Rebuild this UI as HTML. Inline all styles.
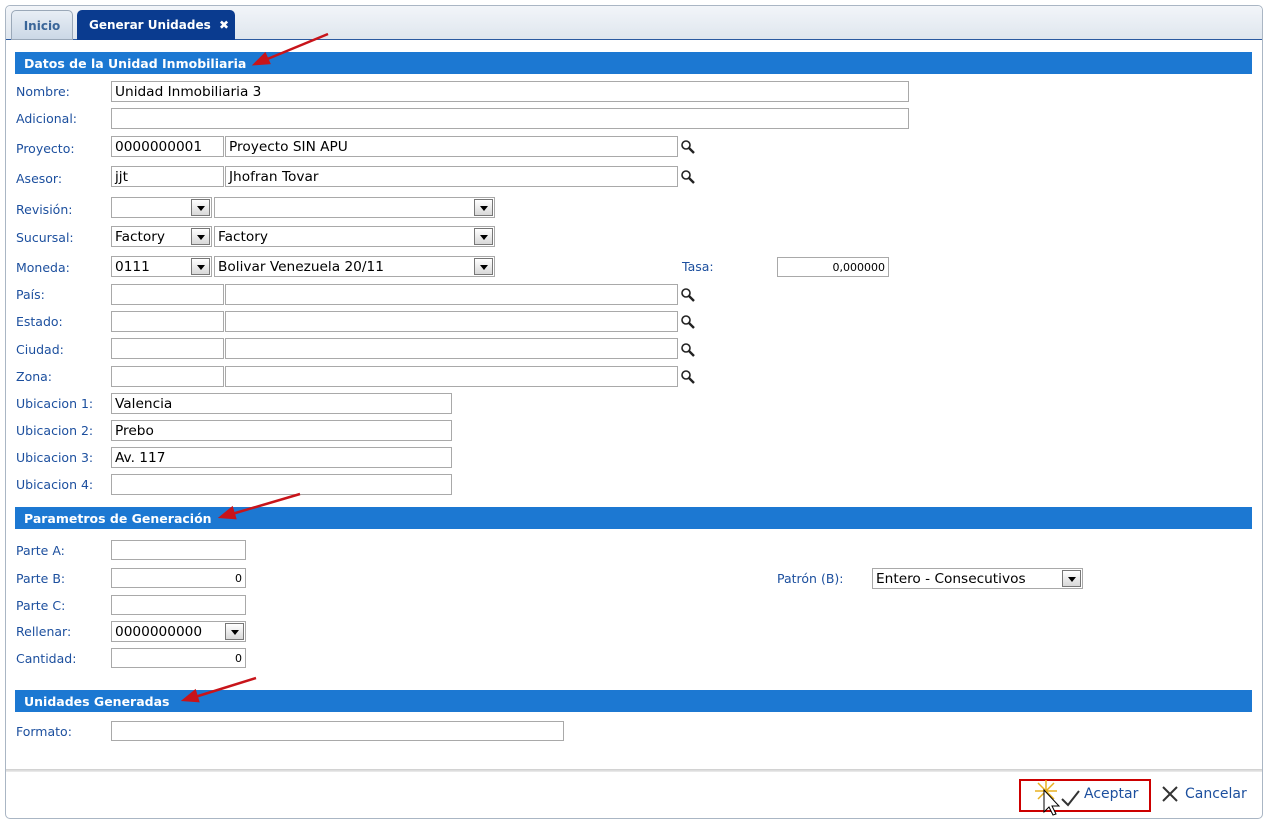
<!DOCTYPE html>
<html><head><meta charset="utf-8"><style>
*{box-sizing:border-box}
body{margin:0;width:1272px;height:826px;background:#fff;font-family:"DejaVu Sans",Verdana,sans-serif;position:relative;overflow:hidden}
.a{position:absolute}
.panel{left:5px;top:5px;width:1258px;height:814px;border:1px solid #aab6c4;border-radius:5px;background:#fff}
.tabbar{left:6px;top:6px;width:1256px;height:34px;background:linear-gradient(#f2f5f9,#dfe6ee);border-bottom:1px solid #2b5aa0;border-radius:5px 5px 0 0}
.tab{top:10px;height:30px;border-radius:5px 5px 0 0;font-size:12px;font-weight:bold;line-height:30px}
.hdr{left:15px;width:1237px;height:22px;background:#1c78d2;color:#fff;font-weight:bold;font-size:12.5px;line-height:24px;padding-left:9px}
.lb{left:16px;font-size:12.5px;color:#1c4f9e;line-height:14px}
.in{height:21px;border:1px solid #a9a9a9;background:#fff;font-size:13.7px;line-height:20px;padding-left:3px;color:#000;white-space:nowrap;overflow:hidden}
.r{text-align:right;padding-right:3px;font-size:11px}
.dd{position:absolute;right:1px;top:1px;width:19px;height:17px;border:1px solid #777;background:linear-gradient(#fff,#d8d8d8)}
.dd:after{content:"";position:absolute;left:5px;top:6px;border-left:4px solid transparent;border-right:4px solid transparent;border-top:5px solid #000}
</style></head><body>
<div class="a panel"></div>
<div class="a tabbar"></div>
<div class="a tab" style="left:11px;width:62px;background:linear-gradient(#e8eef5,#ccd8e6);border:1px solid #9aa8b8;color:#3a6699;text-align:center">Inicio</div>
<div class="a tab" style="left:77px;width:158px;background:#0a3b8f;color:#fff;padding-left:12px">Generar Unidades<span style="position:absolute;left:142px">✖</span></div>

<div class="a hdr" style="top:52px">Datos de la Unidad Inmobiliaria</div>
<div class="a hdr" style="top:507px">Parametros de Generación</div>
<div class="a hdr" style="top:690px">Unidades Generadas</div>

<div class="a lb" style="top:85px">Nombre:</div><div class="a in" style="left:111px;top:81px;width:798px">Unidad Inmobiliaria 3</div>
<div class="a lb" style="top:112px">Adicional:</div><div class="a in" style="left:111px;top:108px;width:798px"></div>
<div class="a lb" style="top:142px">Proyecto:</div><div class="a in" style="left:111px;top:136px;width:113px">0000000001</div><div class="a in" style="left:225px;top:136px;width:453px">Proyecto SIN APU</div>
<div class="a lb" style="top:172px">Asesor:</div><div class="a in" style="left:111px;top:166px;width:113px">jjt</div><div class="a in" style="left:225px;top:166px;width:453px">Jhofran Tovar</div>
<div class="a lb" style="top:203px">Revisión:</div><div class="a in" style="left:111px;top:197px;width:101px"><span class="dd"></span></div><div class="a in" style="left:214px;top:197px;width:281px"><span class="dd"></span></div>
<div class="a lb" style="top:231px">Sucursal:</div><div class="a in" style="left:111px;top:226px;width:101px">Factory<span class="dd"></span></div><div class="a in" style="left:214px;top:226px;width:281px">Factory<span class="dd"></span></div>
<div class="a lb" style="top:261px">Moneda:</div><div class="a in" style="left:111px;top:256px;width:101px">0111<span class="dd"></span></div><div class="a in" style="left:214px;top:256px;width:281px">Bolivar Venezuela 20/11<span class="dd"></span></div>
<div class="a lb" style="left:682px;top:260px">Tasa:</div><div class="a in r" style="left:777px;top:257px;width:112px;height:20px">0,000000</div>
<div class="a lb" style="top:288px">País:</div><div class="a in" style="left:111px;top:284px;width:113px"></div><div class="a in" style="left:225px;top:284px;width:453px"></div>
<div class="a lb" style="top:315px">Estado:</div><div class="a in" style="left:111px;top:311px;width:113px"></div><div class="a in" style="left:225px;top:311px;width:453px"></div>
<div class="a lb" style="top:343px">Ciudad:</div><div class="a in" style="left:111px;top:338px;width:113px"></div><div class="a in" style="left:225px;top:338px;width:453px"></div>
<div class="a lb" style="top:370px">Zona:</div><div class="a in" style="left:111px;top:366px;width:113px"></div><div class="a in" style="left:225px;top:366px;width:453px"></div>
<div class="a lb" style="top:397px">Ubicacion 1:</div><div class="a in" style="left:111px;top:393px;width:341px">Valencia</div>
<div class="a lb" style="top:424px">Ubicacion 2:</div><div class="a in" style="left:111px;top:420px;width:341px">Prebo</div>
<div class="a lb" style="top:451px">Ubicacion 3:</div><div class="a in" style="left:111px;top:447px;width:341px">Av. 117</div>
<div class="a lb" style="top:478px">Ubicacion 4:</div><div class="a in" style="left:111px;top:474px;width:341px"></div>

<svg class="a" style="left:680px;top:138px" width="18" height="250" viewBox="0 0 18 250">
<g fill="none" stroke="#222" stroke-width="1.6">
<circle cx="6" cy="7" r="4"/><path d="M9 10l5 5" stroke-width="2.4"/>
<circle cx="6" cy="37" r="4"/><path d="M9 40l5 5" stroke-width="2.4"/>
<circle cx="6" cy="155" r="4"/><path d="M9 158l5 5" stroke-width="2.4"/>
<circle cx="6" cy="182" r="4"/><path d="M9 185l5 5" stroke-width="2.4"/>
<circle cx="6" cy="210" r="4"/><path d="M9 213l5 5" stroke-width="2.4"/>
<circle cx="6" cy="237" r="4"/><path d="M9 240l5 5" stroke-width="2.4"/>
</g></svg>

<div class="a lb" style="top:544px">Parte A:</div><div class="a in" style="left:111px;top:540px;width:135px;height:20px"></div>
<div class="a lb" style="top:572px">Parte B:</div><div class="a in r" style="left:111px;top:568px;width:135px;height:20px">0</div>
<div class="a lb" style="left:777px;top:572px">Patrón (B):</div><div class="a in" style="left:872px;top:568px;width:211px">Entero - Consecutivos<span class="dd"></span></div>
<div class="a lb" style="top:599px">Parte C:</div><div class="a in" style="left:111px;top:595px;width:135px;height:20px"></div>
<div class="a lb" style="top:625px">Rellenar:</div><div class="a in" style="left:111px;top:621px;width:135px">0000000000<span class="dd"></span></div>
<div class="a lb" style="top:652px">Cantidad:</div><div class="a in r" style="left:111px;top:648px;width:135px;height:20px">0</div>
<div class="a lb" style="top:725px">Formato:</div><div class="a in" style="left:111px;top:721px;width:453px;height:20px"></div>

<div class="a" style="left:6px;top:769px;width:1256px;height:3px;background:linear-gradient(#ccc,#eee)"></div>

<svg class="a" style="left:0;top:0" width="1272" height="826">
<g stroke="#c8141a" stroke-width="2.5" fill="#c8141a">
<path d="M328 34L265 60"/><path d="M255 64l10-10 4 9z"/>
<path d="M300 494L232 514"/><path d="M221 517l11-9 3 10z"/>
<path d="M256 678L195 697"/><path d="M184 700l11-9 3 10z"/>
</g>
<rect x="1020" y="780" width="130" height="31" fill="none" stroke="#c00" stroke-width="2"/>
<path d="M1062 799l6 6 11-14" fill="none" stroke="#333" stroke-width="2"/>
<path d="M1163 787l14 14M1177 787l-14 14" stroke="#333" stroke-width="2"/>
<g stroke="#e8b020" stroke-width="1.5"><path d="M1046 780v22M1035 791h22M1038 783l16 16M1054 783l-16 16"/></g>
<path d="M1044 790v22l5-5 4 8 3-1-4-8h7z" fill="#fff" stroke="#000"/>
</svg>
<div class="a" style="left:1084px;top:786px;font-size:14px;color:#1c4f9e">Aceptar</div>
<div class="a" style="left:1185px;top:786px;font-size:14px;color:#1c4f9e">Cancelar</div>
</body></html>
